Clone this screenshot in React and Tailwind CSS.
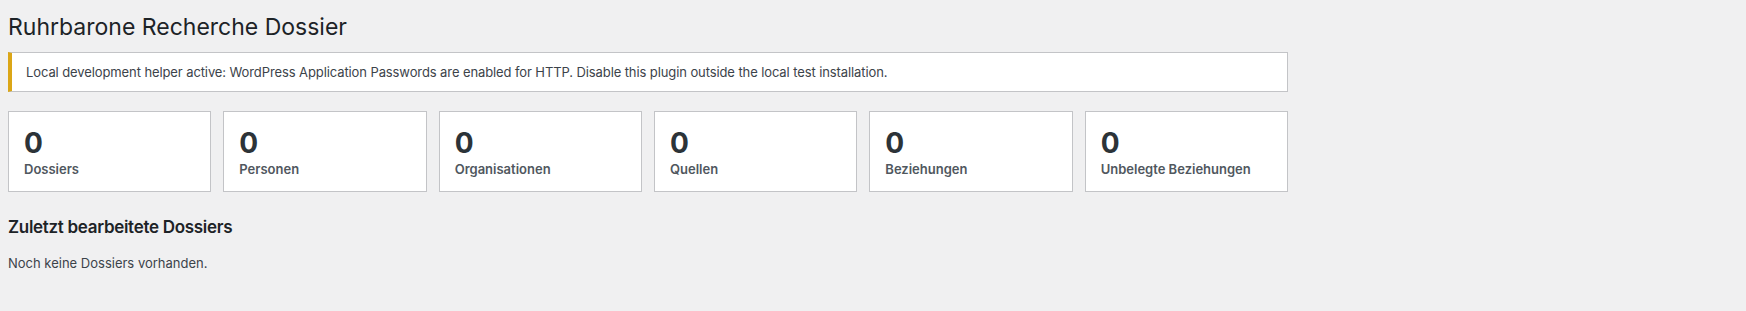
const stats = [
  { label: "Dossiers", value: 0 },
  { label: "Personen", value: 0 },
  { label: "Organisationen", value: 0 },
  { label: "Quellen", value: 0 },
  { label: "Beziehungen", value: 0 },
  { label: "Unbelegte Beziehungen", value: 0 },
];

const StatCard = ({ label, value }) => (
  <div className="bg-white border border-[#c3c4c7] h-[81px] px-[15px] pt-[14px]">
    <div className="text-[28px] leading-[34px] font-bold text-[#2c3338]">{value}</div>
    <div className="text-[13px] leading-[18px] font-semibold text-[#50575e]">{label}</div>
  </div>
);

const App = () => {
  return (
    <div className="min-h-screen bg-[#f0f0f1] font-['Inter',sans-serif] text-[#3c434a]">
      <div className="w-[1280px] ml-2 pt-[9px]">
        <h1 className="text-[23px] leading-[36px] font-normal text-[#1d2327]">
          Ruhrbarone Recherche Dossier
        </h1>

        <div className="mt-[7px] bg-white border border-[#c3c4c7] border-l-4 border-l-[#dba617] h-[40px] flex items-center pl-[14px]">
          <p className="text-[13px] tracking-[-0.1px] text-[#3c434a] translate-y-[1px]">
            Local development helper active: WordPress Application Passwords are enabled for HTTP. Disable this plugin outside the local test installation.
          </p>
        </div>

        <div className="mt-[19px] grid grid-cols-6 gap-3">
          {stats.map((s) => (
            <StatCard key={s.label} label={s.label} value={s.value} />
          ))}
        </div>

        <h2 className="mt-[24px] text-[17px] leading-[22px] font-semibold tracking-[-0.3px] text-[#1d2327]">
          Zuletzt bearbeitete Dossiers
        </h2>
        <p className="mt-[16px] text-[13px] text-[#3c434a]">Noch keine Dossiers vorhanden.</p>
      </div>
    </div>
  );
};

export default App;
